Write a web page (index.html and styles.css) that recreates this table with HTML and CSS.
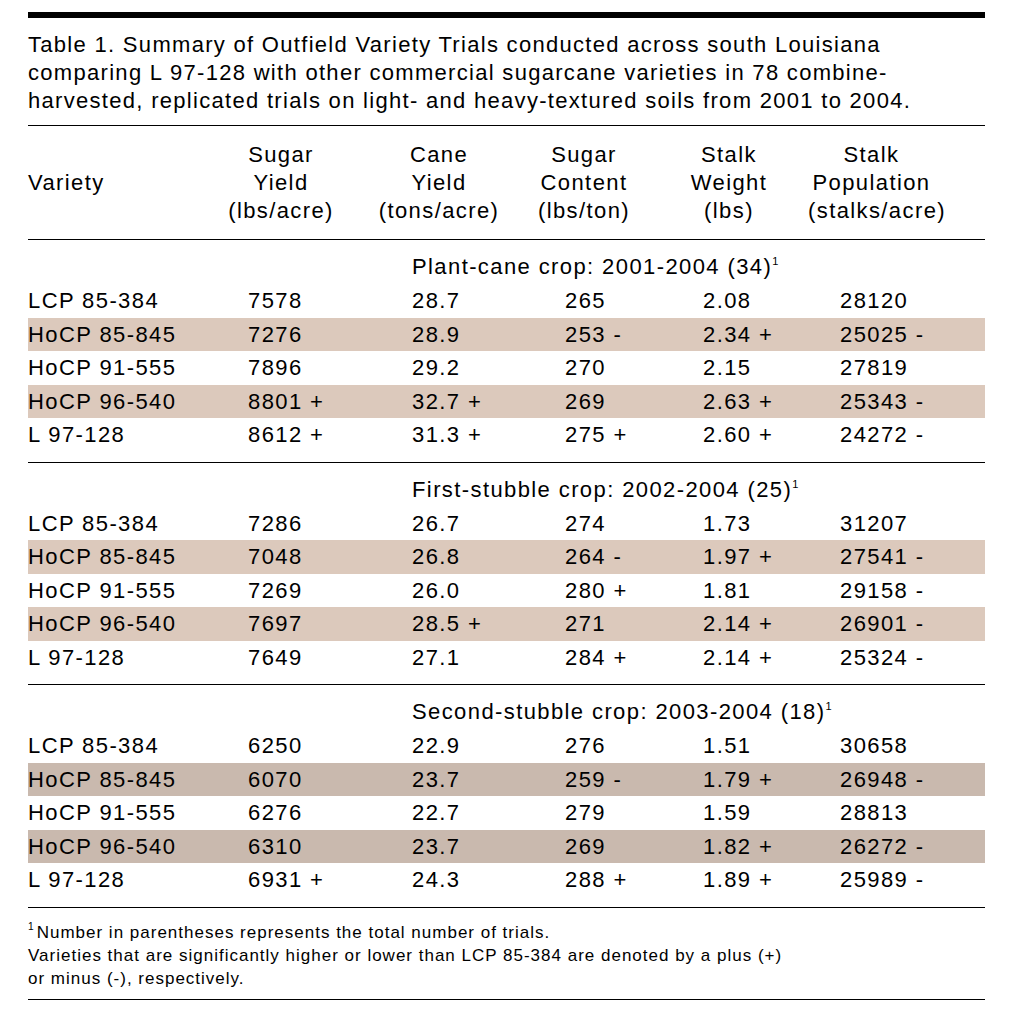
FILE: index.html
```html
<!DOCTYPE html>
<html lang="en">
<head>
  <meta charset="UTF-8">
  <meta name="viewport" content="width=device-width, initial-scale=1.0">
  <title>Table 1. Outfield Variety Trials</title>

  <link rel="stylesheet" href="styles.css">
</head>
<body>

  <div class="page">
    <!-- Heavy rule above the caption -->
    <div class="top-bar"></div>

    <p class="caption">
      Table 1. Summary of Outfield Variety Trials conducted across south Louisiana<br>
      comparing L 97-128 with other commercial sugarcane varieties in 78 combine-<br>
      harvested, replicated trials on light- and heavy-textured soils from 2001 to 2004.
    </p>

    <table class="trials">
      <colgroup>
        <col class="c-variety">
        <col class="c-sugar">
        <col class="c-cane">
        <col class="c-content">
        <col class="c-weight">
        <col class="c-pop">
      </colgroup>

      <thead>
        <tr>
          <th class="left">Variety</th>
          <th>Sugar<br>Yield<br>(lbs/acre)</th>
          <th>Cane<br>Yield<br>(tons/acre)</th>
          <th>Sugar<br>Content<br>(lbs/ton)</th>
          <th>Stalk<br>Weight<br>(lbs)</th>
          <th class="pop">Stalk<br>Population<br>(stalks/acre)</th>
        </tr>
      </thead>

      <!-- Plant-cane -->
      <tbody>
        <tr class="group">
          <td colspan="2"></td>
          <td colspan="4">Plant-cane crop: 2001-2004 (34)<sup>1</sup></td>
        </tr>
        <tr><td>LCP 85-384</td><td>7578</td><td>28.7</td><td>265</td><td>2.08</td><td>28120</td></tr>
        <tr class="shade"><td>HoCP 85-845</td><td>7276</td><td>28.9</td><td>253 -</td><td>2.34 +</td><td>25025 -</td></tr>
        <tr><td>HoCP 91-555</td><td>7896</td><td>29.2</td><td>270</td><td>2.15</td><td>27819</td></tr>
        <tr class="shade"><td>HoCP 96-540</td><td>8801 +</td><td>32.7 +</td><td>269</td><td>2.63 +</td><td>25343 -</td></tr>
        <tr><td>L 97-128</td><td>8612 +</td><td>31.3 +</td><td>275 +</td><td>2.60 +</td><td>24272 -</td></tr>
      </tbody>

      <!-- First-stubble -->
      <tbody>
        <tr class="group">
          <td colspan="2"></td>
          <td colspan="4">First-stubble crop: 2002-2004 (25)<sup>1</sup></td>
        </tr>
        <tr><td>LCP 85-384</td><td>7286</td><td>26.7</td><td>274</td><td>1.73</td><td>31207</td></tr>
        <tr class="shade"><td>HoCP 85-845</td><td>7048</td><td>26.8</td><td>264 -</td><td>1.97 +</td><td>27541 -</td></tr>
        <tr><td>HoCP 91-555</td><td>7269</td><td>26.0</td><td>280 +</td><td>1.81</td><td>29158 -</td></tr>
        <tr class="shade"><td>HoCP 96-540</td><td>7697</td><td>28.5 +</td><td>271</td><td>2.14 +</td><td>26901 -</td></tr>
        <tr><td>L 97-128</td><td>7649</td><td>27.1</td><td>284 +</td><td>2.14 +</td><td>25324 -</td></tr>
      </tbody>

      <!-- Second-stubble -->
      <tbody class="dark">
        <tr class="group">
          <td colspan="2"></td>
          <td colspan="4">Second-stubble crop: 2003-2004 (18)<sup>1</sup></td>
        </tr>
        <tr><td>LCP 85-384</td><td>6250</td><td>22.9</td><td>276</td><td>1.51</td><td>30658</td></tr>
        <tr class="shade"><td>HoCP 85-845</td><td>6070</td><td>23.7</td><td>259 -</td><td>1.79 +</td><td>26948 -</td></tr>
        <tr><td>HoCP 91-555</td><td>6276</td><td>22.7</td><td>279</td><td>1.59</td><td>28813</td></tr>
        <tr class="shade"><td>HoCP 96-540</td><td>6310</td><td>23.7</td><td>269</td><td>1.82 +</td><td>26272 -</td></tr>
        <tr><td>L 97-128</td><td>6931 +</td><td>24.3</td><td>288 +</td><td>1.89 +</td><td>25989 -</td></tr>
      </tbody>
    </table>

    <!-- Notes -->
    <p class="notes">
      <sup>1</sup>Number in parentheses represents the total number of trials.<br>
      Varieties that are significantly higher or lower than LCP 85-384 are denoted by a plus (+)<br>
      or minus (-), respectively.
    </p>
  </div>

</body>
</html>
```

FILE: styles.css
```css
/* General Styles */
* {
  margin: 0;
  padding: 0;
  box-sizing: border-box;
}

body {
  font-family: "Liberation Sans", Arial, sans-serif;
  background-color: #fff;
  color: #000;
}

.page {
  width: 957px;
  margin-left: 28px;
  padding-top: 12px;
}

.top-bar {
  height: 6px;
  background-color: #000;
}

/* Caption */
.caption {
  font-size: 22px;
  line-height: 28px;
  letter-spacing: 1.3px;
  padding: 13px 0 10px;
  border-bottom: 1px solid #000;
}

/* Table */
.trials {
  width: 100%;
  table-layout: fixed;
  border-collapse: collapse;
  font-size: 22px;
  letter-spacing: 1.4px;
}

.c-variety { width: 174px; }
.c-sugar   { width: 158px; }
.c-cane    { width: 158px; }
.c-content { width: 132px; }
.c-weight  { width: 158px; }
.c-pop     { width: 177px; }

.trials th {
  font-weight: normal;
  line-height: 28px;
  padding: 15px 0 14px;
  text-align: center;
  vertical-align: middle;
}

.trials th.left {
  text-align: left;
}

.trials th.pop {
  padding-right: 50px;
}

.trials tbody {
  border-top: 1px solid #000;
}

.trials td {
  line-height: 33.5px;
  white-space: nowrap;
  text-align: left;
}

/* number columns start at these offsets */
.trials td:nth-child(2) { padding-left: 46px; }
.trials td:nth-child(3) { padding-left: 52px; }
.trials td:nth-child(4) { padding-left: 47px; }
.trials td:nth-child(5) { padding-left: 53px; }
.trials td:nth-child(6) { padding-left: 32px; }

.trials tr.group td {
  line-height: 34px;
  padding-top: 10px;
  padding-left: 0;
}

.trials tr.group td:nth-child(2) {
  padding-left: 52px;
}

.trials tr:last-child td {
  padding-bottom: 10px;
}

.trials tr.shade td {
  background-color: #dcc9bc;
}

.trials tbody.dark tr.shade td {
  background-color: #c9b9ae;
}

sup {
  font-size: 0.5em;
  vertical-align: 0.8em;
  line-height: 0;
}

/* Footnotes */
.notes {
  font-size: 17px;
  line-height: 23px;
  letter-spacing: 1px;
  padding: 13px 0 9px;
  border-top: 1px solid #000;
  border-bottom: 1px solid #000;
}

.notes sup {
  font-size: 0.6em;
  vertical-align: 0.7em;
  margin-right: 2px;
}
```
